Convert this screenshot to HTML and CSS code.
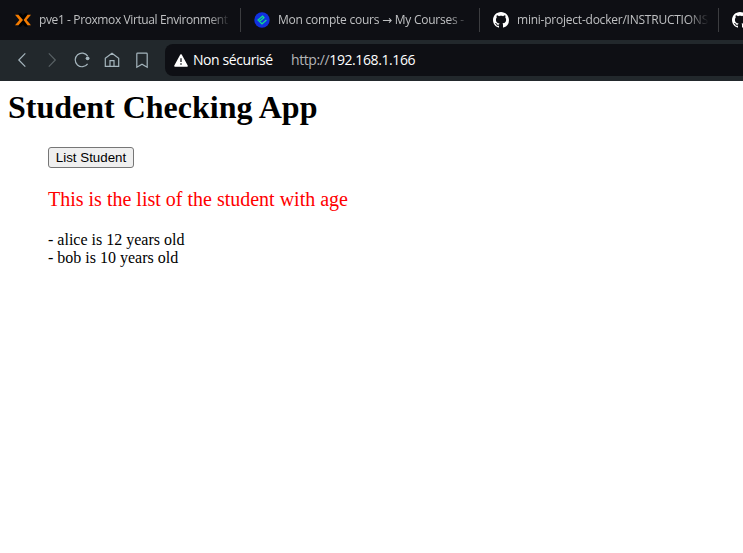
FILE: index.html
```html
<!DOCTYPE html>
<html lang="fr">
<head>
<meta charset="utf-8">
<title>Student Checking App</title>
<link rel="stylesheet" href="styles.css">
</head>
<body>
<svg class="defs" width="0" height="0">
  <symbol id="github" viewBox="0 0 16 16"><path d="M8 0C3.58 0 0 3.58 0 8c0 3.54 2.29 6.53 5.47 7.59.4.07.55-.17.55-.38 0-.19-.01-.82-.01-1.49-2.01.37-2.53-.49-2.69-.94-.09-.23-.48-.94-.82-1.13-.28-.15-.68-.52-.01-.53.63-.01 1.08.58 1.23.82.72 1.21 1.87.87 2.33.66.07-.52.28-.87.51-1.07-1.78-.2-3.64-.89-3.64-3.95 0-.87.31-1.59.82-2.15-.08-.2-.36-1.02.08-2.12 0 0 .67-.21 2.2.82.64-.18 1.32-.27 2-.27s1.36.09 2 .27c1.53-1.04 2.2-.82 2.2-.82.44 1.1.16 1.92.08 2.12.51.56.82 1.27.82 2.15 0 3.07-1.87 3.75-3.65 3.95.29.25.54.73.54 1.48 0 1.07-.01 1.93-.01 2.2 0 .21.15.46.55.38A8.01 8.01 0 0 0 16 8c0-4.42-3.58-8-8-8z"/></symbol>
</svg>
<div class="tabs">
  <div class="tab">
    <svg class="favicon" viewBox="0 0 16 16"><path d="M3 1.2h3L8 3.4l2-2.2h3L9 8l4 6.8h-3l-2-2.2-2 2.2H3L7 8z" fill="#000"/><path d="M0 2.8h3.4L8 8l-4.6 5.2H0L4.4 8zM16 2.8h-3.4L8.6 8l4 5.2H16L11.6 8z" fill="#f57c00"/></svg>
    <span class="label pve">pve1 - Proxmox Virtual Environment</span>
  </div>
  <div class="tab">
    <svg class="favicon" viewBox="0 0 16 16"><circle cx="8" cy="8" r="7.7" fill="#1131df"/><path d="M5.5 9.6 10 5.8 8.6 4.2 4 8l4 4 4.4-4" fill="none" stroke="#13e08c" stroke-width="1.25"/></svg>
    <span class="label course">Mon compte cours <span class="arrow">→</span> My Courses -</span>
  </div>
  <div class="tab">
    <svg class="favicon github"><use href="#github"/></svg>
    <span class="label repo">mini-project-docker/INSTRUCTIONS</span>
  </div>
  <div class="tab">
    <svg class="favicon github"><use href="#github"/></svg>
  </div>
</div>
<div class="toolbar">
  <svg class="tool" viewBox="0 0 18 18"><path d="m12.3 2.3-6.5 6.7 6.5 6.7"/></svg>
  <svg class="tool off" viewBox="0 0 18 18"><path d="m5.8 2.3 6.5 6.7-6.5 6.7"/></svg>
  <svg class="tool" viewBox="0 0 18 18"><path d="M14.7 5.2A6.8 6.8 0 1 0 14.6 12.8"/><circle class="dot" cx="14.6" cy="7.3" r="1.9"/></svg>
  <svg class="tool" viewBox="0 0 18 18"><path d="M2.3 7.2 9 2.2l6.7 5v8.2H2.3zM7 15.2V9.7h4v5.5"/></svg>
  <svg class="tool" viewBox="0 0 18 18"><path d="M3.8 3q0-.8.8-.8h8.8q.8 0 .8.8v13.2L9 13.2l-5.2 3z"/></svg>
  <div class="address">
    <svg class="warning" viewBox="0 0 14 13"><path d="M7 1 13 12H1z" fill="#fff" stroke="#fff" stroke-width="1.6" stroke-linejoin="round"/><path d="M7 4.3v3.6M7 9.2v1.6" stroke="#34363a" stroke-width="1.5"/></svg>
    <span class="security">Non sécurisé</span>
    <span class="url"><span class="scheme">http://</span>192.168.1.166</span>
  </div>
</div>
<main>
  <h1>Student Checking App</h1>
  <div class="content">
    <button type="button">List Student</button>
    <p class="caption">This is the list of the student with age</p>
    <p class="list">- alice is 12 years old<br>- bob is 10 years old</p>
  </div>
</main>
</body>
</html>
```
FILE: styles.css
```css
body { margin: 0; background: #fff; color: #000; font-family: "Liberation Serif", serif; overflow: hidden; }
.defs { display: block; }
.tabs { display: flex; height: 40px; background: #0e0f14; font: 12px/40px "Open Sans", "Noto Sans", sans-serif; color: #bfc0c2; overflow: hidden; }
.tab { box-sizing: border-box; flex: 0 0 239px; min-width: 0; display: flex; align-items: center; padding: 0 10px 0 13px; background: linear-gradient(#3c3d40, #3c3d40) right 8px / 1px 24px no-repeat; }
.tab:first-child { flex-basis: 241px; padding: 0 10px 0 15px; }
.favicon { flex: none; width: 16px; height: 16px; margin-right: 8px; }
.github { fill: #fff; }
.label { flex: 1; min-width: 0; overflow: hidden; white-space: nowrap; -webkit-mask-image: linear-gradient(90deg, #000 calc(100% - 22px), transparent); mask-image: linear-gradient(90deg, #000 calc(100% - 22px), transparent); }
.pve { letter-spacing: -.39px; }
.course { letter-spacing: -.24px; }
.arrow { font-family: "DejaVu Sans", sans-serif; }
.repo { letter-spacing: -.23px; }
.toolbar { box-sizing: border-box; display: flex; align-items: center; height: 41px; padding: 4px 0 5px 13px; background: #22282c; }
.tool { flex: none; width: 18px; height: 18px; margin-right: 12px; fill: none; stroke: #a5b5bd; stroke-width: 1.2; }
.tool .dot { fill: #a5b5bd; stroke: none; }
.off { stroke: #596165; }
.address { flex: 1; display: flex; align-items: center; height: 32px; margin-left: 2px; padding-left: 9px; border-radius: 8px 0 0 8px; background: #0e0f14; color: #fff; font: 14px/32px "Open Sans", "Noto Sans", sans-serif; white-space: nowrap; }
.warning { width: 14px; height: 13px; }
.security { width: 98px; margin-left: 5px; letter-spacing: -.42px; }
.url { letter-spacing: -.4px; }
.scheme { color: #b4b5b7; }
main { padding: 8px; }
h1 { margin: 0; font-size: 32px; line-height: 37px; }
.content { margin: 21px 40px 0; }
button { display: block; box-sizing: border-box; width: 86px; height: 21px; padding: 0; border: 1px solid #767676; border-radius: 3px; background: #efefef; color: #000; font: 13.333px "Liberation Sans", sans-serif; white-space: nowrap; }
.caption { margin: 20px 0; color: red; font-size: 20px; line-height: 23px; }
.list { margin: 0; font-size: 16px; line-height: 18px; }
```
